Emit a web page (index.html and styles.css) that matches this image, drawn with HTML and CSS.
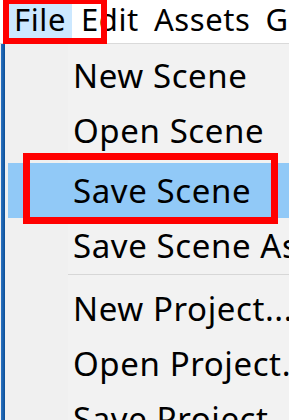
FILE: index.html
```html
<!DOCTYPE html>
<html>
<head>
<meta charset="utf-8">
<link rel="stylesheet" href="styles.css">
</head>
<body>
<div class="screen">
  <div class="menubar">
    <span class="mb-item mb-active">File</span>
    <span class="mb-item">Edit</span>
    <span class="mb-item">Assets</span>
    <span class="mb-item">GameObject</span>
  </div>
  <div class="body">
    <div class="edge"></div>
    <div class="stripe"></div>
    <div class="menu">
      <div class="item"><span class="gutter"></span><span class="label">New Scene</span></div>
      <div class="item"><span class="gutter"></span><span class="label">Open Scene</span></div>
      <div class="item item-hot"><span class="gutter"></span><span class="label">Save Scene</span></div>
      <div class="item"><span class="gutter"></span><span class="label">Save Scene As...</span></div>
      <div class="sep"></div>
      <div class="item"><span class="gutter"></span><span class="label">New Project...</span></div>
      <div class="item"><span class="gutter"></span><span class="label">Open Project...</span></div>
      <div class="item"><span class="gutter"></span><span class="label">Save Project</span></div>
    </div>
  </div>
  <div class="mark mark-file"></div>
  <div class="mark mark-save"></div>
</div>
</body>
</html>
```

FILE: styles.css
```css
html, body {
  margin: 0;
  padding: 0;
  background: #f0f0f0;
}
.screen {
  position: relative;
  width: 289px;
  height: 420px;
  overflow: hidden;
  font-family: "Noto Sans", "Open Sans", sans-serif;
  color: #000;
}
.menubar {
  display: flex;
  align-items: flex-start;
  height: 43px;
  border-bottom: 1px solid #dadada;
  background: #fff;
  white-space: nowrap;
  padding-left: 9px;
  font-size: 31px;
  letter-spacing: 0.6px;
  overflow: hidden;
}
.mb-item {
  flex: none;
  padding: 0 6px 0 5px;
  margin-right: 4px;
  line-height: 38px;
}
.mb-active {
  background: #cce8ff;
}
.body {
  display: flex;
  height: 376px;
}
.edge {
  width: 1px;
  background: #f0f0f0;
}
.stripe {
  width: 4px;
  background: linear-gradient(to right, #2a72c0, #0d4f98);
}
.menu {
  flex: 1;
  padding: 4px 0 0 3px;
  background: linear-gradient(to right, #f0f0f0 63px, #f2f2f2 63px);
  white-space: nowrap;
  overflow: hidden;
}
.item {
  display: flex;
  height: 55px;
  font-size: 33px;
  letter-spacing: 0.6px;
  line-height: 55px;
}
.gutter {
  flex: none;
  width: 60px;
}
.label {
  padding-left: 5px;
}
.item-hot {
  margin-top: 5px;
  background: #91c9f7;
}
.sep {
  height: 1px;
  margin: 1px 0 6px 60px;
  background: #d7d7d7;
}
.mark {
  position: absolute;
  border: 7px solid #ff0000;
  box-sizing: border-box;
}
.mark-file {
  left: 3px;
  top: -2px;
  width: 104px;
  height: 46px;
  border-width: 6px;
}
.mark-save {
  left: 23px;
  top: 153px;
  width: 255px;
  height: 71px;
}
```
